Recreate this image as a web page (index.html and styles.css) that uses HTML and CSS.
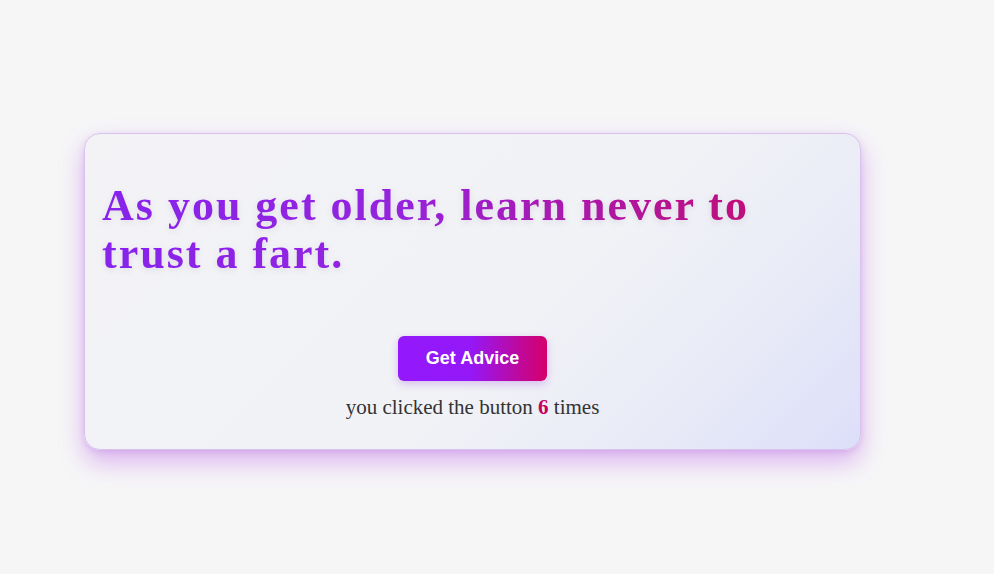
FILE: index.html
```html
<!DOCTYPE html>
<html>
<head>
<meta charset="utf-8">
<link rel="stylesheet" href="styles.css">
</head>
<body>
<main class="card">
  <h1 class="advice">As you get older, learn never to trust a fart.</h1>
  <div class="actions">
    <button class="btn">Get Advice</button>
    <p class="count">you clicked the button <b class="num">6</b> times</p>
  </div>
</main>
</body>
</html>
```
FILE: styles.css
```css
html, body { margin: 0; padding: 0; }
body {
  background: #f6f6f7;
  width: 994px;
  height: 574px;
  padding: 133px 0 0 84px;
  box-sizing: border-box;
  font-family: "Liberation Serif", "Times New Roman", serif;
}
.card {
  width: 777px;
  height: 317px;
  box-sizing: border-box;
  padding: 48px 17px 0 17px;
  border: 1px solid #d9c2ee;
  border-radius: 16px;
  background: linear-gradient(135deg, #f3f3f6 0%, #f1f2f6 58%, #e8eaf7 80%, #dcdff9 100%);
  box-shadow: 0 12px 24px rgba(175, 60, 230, 0.36), 0 2px 6px rgba(120, 60, 180, 0.15);
}
.advice {
  margin: 0;
  font-size: 44px;
  line-height: 48px;
  font-weight: bold;
  letter-spacing: 2px;
  background: linear-gradient(90deg, #8b1ef6 0%, #9a1ee6 40%, #d00468 95%);
  -webkit-background-clip: text;
  background-clip: text;
  color: transparent;
  text-shadow: 0 2px 6px rgba(100, 100, 130, 0.15);
}
.actions {
  display: flex;
  flex-direction: column;
  align-items: center;
  margin-top: 58px;
}
.btn {
  width: 149px;
  height: 45px;
  border: none;
  border-radius: 6px;
  background: linear-gradient(90deg, #9318fb 0%, #9418f8 48%, #d5006a 100%);
  color: #fff;
  font-family: "Liberation Sans", Arial, sans-serif;
  font-weight: bold;
  font-size: 18px;
  box-shadow: 0 3px 8px rgba(140, 30, 220, 0.25);
}
.count {
  margin: 14px 0 0;
  font-size: 21px;
  line-height: 24px;
  color: #333;
}
.num { color: #c8005c; }
```
